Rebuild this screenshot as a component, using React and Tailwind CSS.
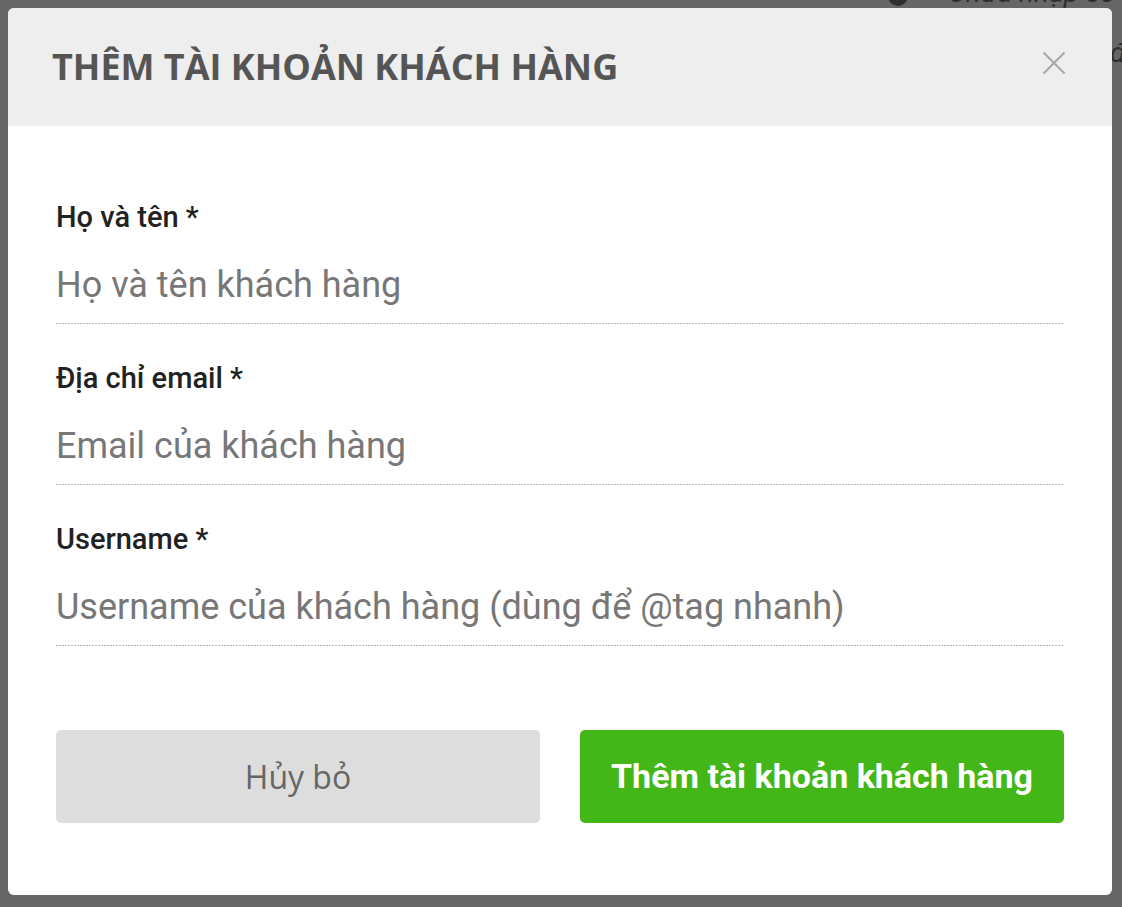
const fields = [
  { label: 'Họ và tên *', placeholder: 'Họ và tên khách hàng' },
  { label: 'Địa chỉ email *', placeholder: 'Email của khách hàng' },
  { label: 'Username *', placeholder: 'Username của khách hàng (dùng để @tag nhanh)' },
]

export default function App() {
  return (
    <div className="relative h-[907px] w-full overflow-hidden bg-[#666] p-2">
      {/* page behind the overlay, only a corner shows */}
      <div className="absolute left-[888px] top-[-14px] h-[20px] w-[20px] rounded-full bg-[#2e2e2e]" />
      <div className="absolute left-[948px] top-[-27px] whitespace-nowrap text-[28px] italic leading-[40px] text-[#2e2e2e] [font-family:'Roboto',sans-serif]">
        Chưa nhập số điện thoại
      </div>
      <div className="absolute left-[1110px] top-[33px] whitespace-nowrap text-[28px] italic leading-[40px] text-[#2e2e2e] [font-family:'Roboto',sans-serif]">
        đ
      </div>

      {/* modal */}
      <div className="relative flex h-[887px] w-[1104px] flex-col overflow-hidden rounded-md bg-white">
        <div className="flex h-[118px] shrink-0 items-center justify-between bg-[#eee] pl-[44px] pr-[46px]">
          <h2 className="text-[36px] font-bold leading-none text-[#555] [font-family:'Open_Sans',sans-serif]">
            THÊM TÀI KHOẢN KHÁCH HÀNG
          </h2>
          <button className="mb-2 text-[#aaa]">
            <svg className="block" width="24" height="24" viewBox="0 0 24 24" fill="none" stroke="currentColor" strokeWidth="2.2">
              <path d="M1.5 1.5 L22.5 22.5 M22.5 1.5 L1.5 22.5" />
            </svg>
          </button>
        </div>

        <div className="flex flex-col px-12 pt-[73px] [font-family:'Roboto',sans-serif]">
          <div className="flex flex-col gap-9">
            {fields.map((f) => (
              <div key={f.label} className="flex flex-col">
                <label className="text-[29px] font-medium leading-[36px] text-[#222]">{f.label}</label>
                <input
                  className="mt-2 h-[80px] pt-1 text-[36px] text-[#333] outline-none placeholder:text-[#777]"
                  placeholder={f.placeholder}
                />
                <div className="h-px bg-[linear-gradient(to_right,#b8b8b8_2px,transparent_2px)] bg-[length:3px_1px]" />
              </div>
            ))}
          </div>

          <div className="mt-[84px] grid grid-cols-2 gap-10">
            <button className="h-[93px] rounded-[5px] bg-[#ddd] text-[32px] text-[#666] [font-family:'Open_Sans',sans-serif]">
              Hủy bỏ
            </button>
            <button className="h-[93px] rounded-[5px] bg-[#44b718] text-[34px] font-bold text-white">
              Thêm tài khoản khách hàng
            </button>
          </div>
        </div>
      </div>
    </div>
  )
}
